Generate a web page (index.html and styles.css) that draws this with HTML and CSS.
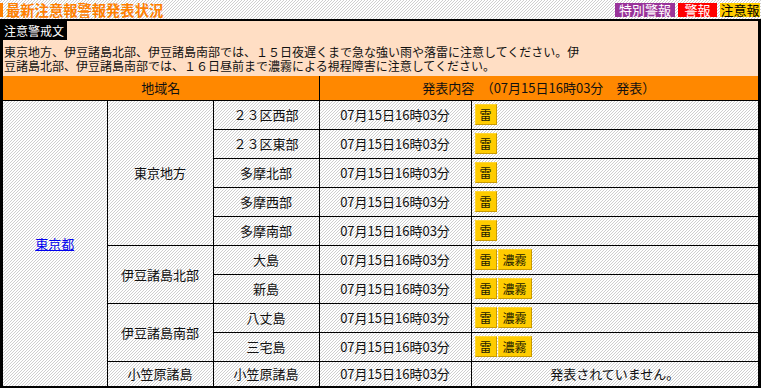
FILE: index.html
```html
<!DOCTYPE html>
<html lang="ja">
<head>
<meta charset="utf-8">
<title>最新注意報警報発表状況</title>
<link rel="stylesheet" href="styles.css">
</head>
<body>
<div class="topbar">
  <h1 class="title">最新注意報警報発表状況</h1>
  <div class="legend">
    <span class="lg lg-special">特別警報</span>
    <span class="lg lg-warn">警報</span>
    <span class="lg lg-adv">注意報</span>
  </div>
</div>
<div class="panel">
  <div class="notice">
    <div class="notice-head"><span class="notice-label">注意警戒文</span></div>
    <p class="notice-text">東京地方、伊豆諸島北部、伊豆諸島南部では、１５日夜遅くまで急な強い雨や落雷に注意してください。伊<br>豆諸島北部、伊豆諸島南部では、１６日昼前まで濃霧による視程障害に注意してください。</p>
  </div>
  <table class="status">
    <colgroup>
      <col class="c-pref">
      <col class="c-area">
      <col class="c-sub">
      <col class="c-time">
      <col class="c-info">
    </colgroup>
    <thead>
      <tr><th colspan="3">地域名</th><th colspan="2">発表内容　（07月15日16時03分　発表）</th></tr>
    </thead>
    <tbody>
      <tr>
        <td rowspan="10"><a href="#" class="pref-link">東京都</a></td>
        <td rowspan="5">東京地方</td>
        <td>２３区西部</td><td>07月15日16時03分</td>
        <td class="info"><div class="tags"><span class="tag">雷</span></div></td>
      </tr>
      <tr><td>２３区東部</td><td>07月15日16時03分</td><td class="info"><div class="tags"><span class="tag">雷</span></div></td></tr>
      <tr><td>多摩北部</td><td>07月15日16時03分</td><td class="info"><div class="tags"><span class="tag">雷</span></div></td></tr>
      <tr><td>多摩西部</td><td>07月15日16時03分</td><td class="info"><div class="tags"><span class="tag">雷</span></div></td></tr>
      <tr><td>多摩南部</td><td>07月15日16時03分</td><td class="info"><div class="tags"><span class="tag">雷</span></div></td></tr>
      <tr>
        <td rowspan="2">伊豆諸島北部</td>
        <td>大島</td><td>07月15日16時03分</td>
        <td class="info"><div class="tags"><span class="tag">雷</span><span class="tag">濃霧</span></div></td>
      </tr>
      <tr><td>新島</td><td>07月15日16時03分</td><td class="info"><div class="tags"><span class="tag">雷</span><span class="tag">濃霧</span></div></td></tr>
      <tr>
        <td rowspan="2">伊豆諸島南部</td>
        <td>八丈島</td><td>07月15日16時03分</td>
        <td class="info"><div class="tags"><span class="tag">雷</span><span class="tag">濃霧</span></div></td>
      </tr>
      <tr><td>三宅島</td><td>07月15日16時03分</td><td class="info"><div class="tags"><span class="tag">雷</span><span class="tag">濃霧</span></div></td></tr>
      <tr>
        <td>小笠原諸島</td><td>小笠原諸島</td><td>07月15日16時03分</td>
        <td>発表されていません。</td>
      </tr>
    </tbody>
  </table>
</div>
</body>
</html>
```
FILE: styles.css
```css
html, body {
  margin: 0;
  padding: 0;
}
body {
  font-family: "Noto Sans CJK JP", "Noto Sans", sans-serif;
  font-size: 13px;
  color: #111;
  background: repeating-linear-gradient(135deg, #ffffff 0 1.41px, #cfcfcf 1.41px 2.12px);
  min-height: 388px;
}

.topbar {
  display: flex;
  justify-content: space-between;
  align-items: center;
  height: 19px;
}
.title {
  margin: 0;
  font-size: 14.3px;
  line-height: 14px;
  font-weight: bold;
  color: #ff8000;
  border-left: 3px solid #ff8000;
  padding-left: 3px;
}
.legend {
  display: flex;
  gap: 3px;
  margin-right: 1px;
}
.lg {
  height: 14px;
  line-height: 14px;
  font-size: 13px;
  text-align: center;
  color: #fff;
}
.lg-special { width: 60px; background: #993399; }
.lg-warn { width: 39px; background: #ff0000; }
.lg-adv { width: 40px; background: #ffcc00; color: #000; }

.panel {
  border: 2px solid #000;
  border-left-width: 3px;
  border-right-width: 3px;
}
.notice {
  background: #ffdec4;
}
.notice-head {
  line-height: 0;
}
.notice-label {
  display: inline-block;
  background: #000;
  color: #fff;
  font-size: 12px;
  line-height: 19px;
  padding: 0 3px 0 1px;
}
.notice-text {
  margin: 0;
  padding: 5px 4px 3px 1px;
  font-size: 12px;
  line-height: 14px;
}

.status {
  width: 100%;
  border-collapse: collapse;
  border-style: hidden;
  table-layout: fixed;
}
.c-pref { width: 104px; }
.c-area { width: 106px; }
.c-sub { width: 106px; }
.c-time { width: 152px; }

.status th,
.status td {
  border: 1px solid #000;
  padding: 3px;
  line-height: 18px;
  text-align: center;
  font-weight: normal;
  font-size: 13px;
}
.status thead th {
  background: #ff8800;
}
.status td.info {
  text-align: left;
}
.pref-link {
  color: #0000ee;
}
.tags {
  display: flex;
  gap: 1px;
  height: 22px;
  align-items: flex-start;
}
.tag {
  display: block;
  height: 19px;
  line-height: 19px;
  padding: 0 4px;
  font-size: 12px;
  color: #1a1a00;
  background: #ffcc00;
  border: 1px solid;
  border-color: #ffd633 #c99a00 #c99a00 #ffd633;
}
```
